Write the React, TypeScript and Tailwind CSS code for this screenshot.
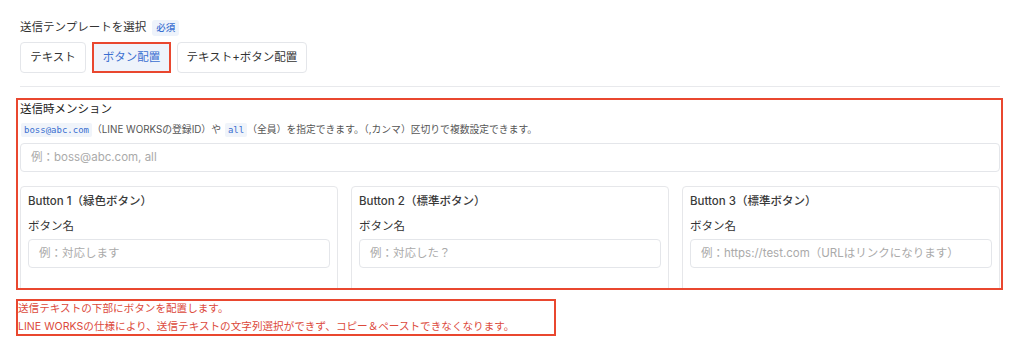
import React from "react";

const font = { fontFamily: 'Inter, "Noto Sans CJK JP", sans-serif' };

const buttons = [
    { title: "Button 1（緑色ボタン）", placeholder: "例：対応します" },
    { title: "Button 2（標準ボタン）", placeholder: "例：対応した？" },
    { title: "Button 3（標準ボタン）", placeholder: "例：https://test.com（URLはリンクになります）" },
];

const App: React.FC = () => {
    return (
        <div className="w-[1024px] h-[354px] bg-white pl-[16px] pr-[21px] pt-[20px] text-[#333]" style={font}>
            <div className="pl-[4px]">
                <div className="flex items-center gap-[6px] h-[16px]">
                    <span className="text-[11.5px] text-[#333]">送信テンプレートを選択</span>
                    <span className="bg-[#eef3fb] text-[#3a6fd1] text-[9.5px] font-medium rounded-[3px] px-[4px] h-[16px] flex items-center">必須</span>
                </div>
                <div className="flex gap-[6px] mt-[6px]">
                    <button className="h-[31px] w-[66px] border border-[#e4e6ea] rounded-[4px] text-[11.5px] text-[#333]">テキスト</button>
                    <button className="h-[31px] w-[79px] border-2 border-[#e9472f] bg-[#eef3fb] text-[11.5px] text-[#3a6fd1]">ボタン配置</button>
                    <button className="h-[31px] w-[130px] border border-[#e4e6ea] rounded-[4px] text-[11.5px] text-[#333]">テキスト+ボタン配置</button>
                </div>
                <div className="h-px bg-[#e8e9ec] mt-[13px] mr-[3px]"></div>
            </div>

            <div className="mt-[11px] border-2 border-[#e9472f] pl-[2px] pr-[1px] h-[192px] overflow-hidden">
                <div className="text-[11.5px] text-[#222] h-[18px] leading-[18px]">送信時メンション</div>
                <div className="flex items-center text-[9.8px] text-[#555] mt-[5px] h-[14px]">
                    <code className="bg-[#f0f4fa] text-[#3a6fd1] text-[9px] px-[3px] rounded-[2px] leading-[14px] ml-[1px]" style={{ fontFamily: '"DejaVu Sans Mono", monospace' }}>boss@abc.com</code>
                    <span>（LINE WORKSの登録ID）や</span>
                    <code className="bg-[#f0f4fa] text-[#3a6fd1] text-[9px] px-[3px] rounded-[2px] leading-[14px] ml-[4px]" style={{ fontFamily: '"DejaVu Sans Mono", monospace' }}>all</code>
                    <span>（全員）を指定できます。（,カンマ）区切りで複数設定できます。</span>
                </div>
                <div className="mt-[6px] h-[29px] border border-[#e4e6ea] rounded-[4px] flex items-center pl-[10px] text-[11.5px] text-[#aaa]">
                    例：boss@abc.com, all
                </div>
                <div className="grid grid-cols-3 gap-[13px] mt-[14px]">
                    {buttons.map((b) => (
                        <div key={b.title} className="border border-[#e6e7ea] rounded-[4px] h-[110px] px-[7px] pt-[6px]">
                            <div className="text-[11.5px] font-medium text-[#3a3a3a] leading-[16px]">{b.title}</div>
                            <div className="text-[11.5px] text-[#333] mt-[9px] leading-[16px]">ボタン名</div>
                            <div className="mt-[5px] h-[29px] border border-[#e4e6ea] rounded-[4px] flex items-center pl-[10px] text-[11.5px] text-[#aaa]">
                                {b.placeholder}
                            </div>
                        </div>
                    ))}
                </div>
            </div>

            <div className="mt-[9px] w-[540px] h-[37px] border-2 border-[#e9472f] flex flex-col justify-center text-[10.6px] leading-[18px] text-[#dc4a3c]">
                <div>送信テキストの下部にボタンを配置します。</div>
                <div>LINE WORKSの仕様により、送信テキストの文字列選択ができず、コピー＆ペーストできなくなります。</div>
            </div>
        </div>
    );
};

export default App;
